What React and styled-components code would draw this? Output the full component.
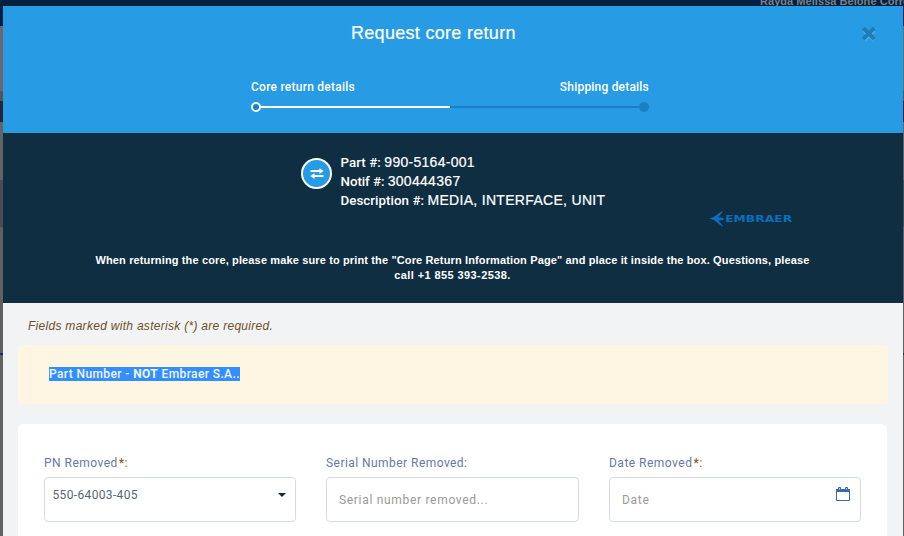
import React from "react";
import styled, { createGlobalStyle } from "styled-components";

const Global = createGlobalStyle`
  *{box-sizing:border-box}
  body{margin:0;background:#5f6060;font-family:"Liberation Sans",Arial,sans-serif;overflow:hidden}
`;
const Page = styled.div`
  width:904px;height:536px;padding:6px 1px 0 3px;position:relative;overflow:hidden;
  background:linear-gradient(#02203f 0 26px,#686968 26px 91px,#555 91px 101px,#20253b 101px 122px,#636464 122px 180px,#484c56 180px 227px,#5f6060 227px 353px,#153166 353px 355px,#626262 355px);
`;
const UserName = styled.div`
  position:absolute;left:760px;top:-6px;white-space:nowrap;color:#77808a;
  font:bold 11px/14px "Liberation Sans",Arial,sans-serif;letter-spacing:.05px;
`;
const Modal = styled.main`position:relative;width:900px;height:530px;background:#f1f3f5;overflow:hidden;`;
const Header = styled.header`height:127px;background:#279be4;display:grid;grid-template-columns:348px 1fr auto;align-content:start;color:#fff;`;
const Title = styled.h1`
  grid-column:2;margin:15px 0 0;font-weight:400;font-size:18px;line-height:24px;
  letter-spacing:${p => p.$ls};white-space:nowrap;-webkit-text-stroke:.2px #fff;
`;
const Close = styled.button`
  justify-self:end;width:16px;height:16px;margin:20px 26px 0 0;padding:0;border:0;background:none;display:block;
  svg{display:block}
`;
const Steps = styled.section`grid-column:1/4;width:398px;margin:34px 0 0 248px;`;
const StepLabels = styled.div`display:flex;justify-content:space-between;font:500 12px/16px Roboto,sans-serif;`;
const StepLabel = styled.span`letter-spacing:${p => p.$ls};white-space:nowrap;`;
const Track = styled.div`display:flex;align-items:center;height:10px;margin-top:7px;`;
const Dot = styled.span`
  width:10px;height:10px;border-radius:50%;background:#1b7fc3;
  border:${p => (p.$active ? "2px solid #fff" : "0")};
`;
const Segment = styled.span`flex:1;height:2px;background:${p => (p.$done ? "#fff" : "#1b7fc3")};`;
const Summary = styled.section`height:170px;background:#0f2e42;color:#fff;display:flex;flex-direction:column;`;
const PartInfo = styled.div`display:flex;padding:20px 0 0 298px;height:78px;`;
const Swap = styled.div`
  width:31px;height:31px;margin:5px 8.5px 0 0;border:2px solid #fff;border-radius:50%;background:#279be4;
  display:grid;place-items:center;
`;
const Line = styled.div`
  font:14px/19px "Liberation Sans",Arial,sans-serif;white-space:nowrap;letter-spacing:${p => p.$ls};
  -webkit-text-stroke:.2px #fff;
`;
const Key = styled.span`font:500 13.3px/19px Roboto,sans-serif;letter-spacing:${p => p.$ls};-webkit-text-stroke:0;`;
const Logo = styled.svg`display:block;width:84px;height:16px;margin:0 0 0 706px;`;
const Notice = styled.p`
  margin:26px 0 0;text-align:center;font:bold 11px/15px "Liberation Sans",Arial,sans-serif;white-space:nowrap;padding-right:1px;
`;
const NoticeLine = styled.span`display:block;letter-spacing:${p => p.$ls};`;
const Hint = styled.p`
  margin:14px 0 0 25px;font:italic 12px/18px "Liberation Sans",Arial,sans-serif;color:#72501f;
  letter-spacing:.29px;white-space:nowrap;
`;
const Alert = styled.div`
  width:870px;height:59px;margin:10px 0 0 15px;padding:22px 0 0 31px;border-radius:4px;background:#fef6e3;
`;
const Selected = styled.span`
  display:inline-block;height:14px;background:#338fff;color:#eef6ff;font:500 12px/14px Roboto,sans-serif;
  letter-spacing:.39px;white-space:nowrap;vertical-align:top;b{font-weight:700}
`;
const Card = styled.form`
  width:869px;height:140px;margin:20px 0 0 15px;padding:30px 27px 0 26px;border-radius:6px;background:#fff;
  display:grid;grid-template-columns:252px 253px 252px;column-gap:30px;
`;
const Field = styled.div`display:flex;flex-direction:column;`;
const Label = styled.label`
  font:400 12px/18px Roboto,sans-serif;color:#6678a9;letter-spacing:${p => p.$ls};white-space:nowrap;height:23px;
`;
const Star = styled.span`color:#8a5a18;font-weight:500;margin-left:1px;`;
const Control = styled.div`
  height:45px;border:1px solid #d5dbe7;border-radius:4px;background:#fff;display:flex;justify-content:space-between;
  padding:${p => (p.$select ? "8px 9px 8px 7.5px" : "9px 10px 0 12px")};
  font:400 12px/18px Roboto,sans-serif;color:${p => (p.$select ? "#5b6673" : "#999")};
`;
const Value = styled.span`padding-top:${p => p.$top};letter-spacing:${p => p.$ls};white-space:nowrap;`;
const Caret = styled.i`width:0;height:0;margin-top:7px;border:4px solid transparent;border-top-color:#172536;border-bottom:0;`;

export default function App() {
  return (
    <>
      <Global />
      <Page>
        <UserName>Rayda Melissa Belone Corre</UserName>
        <Modal>
          <Header>
            <Title $ls=".3px">Request core return</Title>
            <Close aria-label="Close">
              <svg width="16" height="16" viewBox="0 0 16 16">
                <path d="M3.2 3.2 12.8 12.8M12.8 3.2 3.2 12.8" stroke="#60b6eb" strokeWidth="4" transform="translate(0 .8)" />
                <path d="M2.2 2.2 13.2 13.2M13.2 2.2 2.2 13.2" stroke="#207cb6" strokeWidth="4" />
              </svg>
            </Close>
            <Steps>
              <StepLabels>
                <StepLabel $ls=".25px">Core return details</StepLabel>
                <StepLabel $ls=".2px">Shipping details</StepLabel>
              </StepLabels>
              <Track><Dot $active /><Segment $done /><Segment /><Dot /></Track>
            </Steps>
          </Header>
          <Summary>
            <PartInfo>
              <Swap>
                <svg width="14" height="11" viewBox="0 0 14 11" fill="#fff">
                  <path d="M.5 2h9V0l4 3-4 3V4h-9zM13.5 7h-9V5l-4 3 4 3V9h9z" />
                </svg>
              </Swap>
              <div>
                <Line $ls=".28px"><Key $ls=".08px">Part #: </Key>990-5164-001</Line>
                <Line $ls=".3px"><Key $ls="-.05px">Notif #: </Key>300444367</Line>
                <Line $ls=".31px"><Key $ls=".06px">Description #: </Key>MEDIA, INTERFACE, UNIT</Line>
              </div>
            </PartInfo>
            <Logo viewBox="0 0 84 16" fill="#0870bd">
              <path d="M0 7.5 4.8 6 12.5.5H14L9.2 6.2 14.5 7v2L9.2 9.4 14 15h-1.5L4.8 9z" />
              <text x="16.2" y="11.3" fontFamily="DejaVu Sans, sans-serif" fontWeight="700" fontSize="9.3" textLength="67" lengthAdjust="spacingAndGlyphs">EMBRAER</text>
            </Logo>
            <Notice>
              <NoticeLine $ls=".135px">When returning the core, please make sure to print the "Core Return Information Page" and place it inside the box. Questions, please</NoticeLine>
              <NoticeLine $ls=".4px">call +1 855 393-2538.</NoticeLine>
            </Notice>
          </Summary>
          <Hint>Fields marked with asterisk (*) are required.</Hint>
          <Alert><Selected>Part Number - <b>NOT</b> Embraer S.A..</Selected></Alert>
          <Card>
            <Field>
              <Label $ls=".47px">PN Removed<Star>*</Star>:</Label>
              <Control $select><Value $top="0" $ls=".35px">550-64003-405</Value><Caret /></Control>
            </Field>
            <Field>
              <Label $ls=".45px">Serial Number Removed:</Label>
              <Control><Value $top="4px" $ls=".69px">Serial number removed...</Value></Control>
            </Field>
            <Field>
              <Label $ls=".49px">Date Removed<Star>*</Star>:</Label>
              <Control>
                <Value $top="4px" $ls=".69px">Date</Value>
                <svg width="14" height="15" viewBox="0 0 14 15">
                  <path d="M.5 3.5h13v10H.5z" fill="none" stroke="#376ca6" />
                  <path d="M0 2h14v3H0z" fill="#376ca6" />
                  <path d="M2.5.5h2v2.5h-2zM9.5.5h2v2.5h-2z" fill="#bfd4ed" stroke="#376ca6" />
                </svg>
              </Control>
            </Field>
          </Card>
        </Modal>
      </Page>
    </>
  );
}
